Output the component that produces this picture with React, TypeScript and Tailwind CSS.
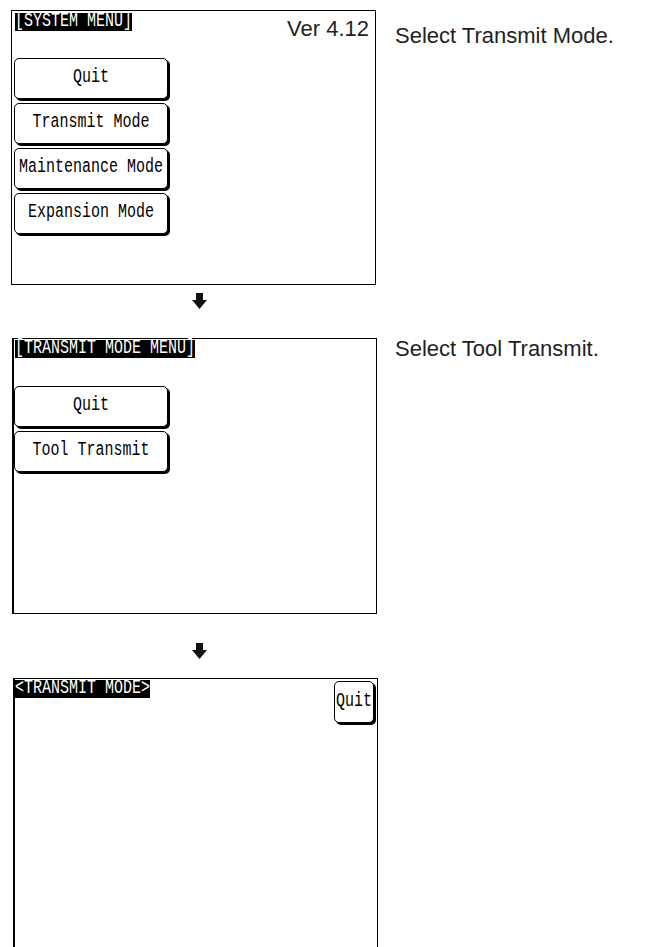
import React from 'react'

const lcd = "font-['Liberation_Mono','DejaVu_Sans_Mono',monospace] text-[15px]"
const sans = "font-['Liberation_Sans',Arial,sans-serif] text-[22px] leading-none text-[#231f20]"

function Title({ children }: { children: React.ReactNode }) {
  return (
    <div className={`${lcd} h-[18px] leading-[18px] bg-black text-white whitespace-pre`}>
      <span className="inline-block scale-y-[1.3]">{children}</span>
    </div>
  )
}

function LcdButton({ label, className = 'w-[154px] h-[41px]' }: { label: string; className?: string }) {
  return (
    <div
      className={`${className} ${lcd} flex items-center justify-center whitespace-pre rounded-[5px] border border-black bg-white text-black shadow-[2px_2px_0_#000]`}
    >
      <span className="inline-block scale-y-[1.3]">{label}</span>
    </div>
  )
}

function DownArrow() {
  return (
    <svg width="15" height="16" viewBox="0 0 15 16" className="ml-[192px]">
      <rect x="4" y="0" width="7" height="8" fill="#111" />
      <polygon points="0,7 15,7 7.5,16" fill="#111" />
    </svg>
  )
}

export default function App() {
  return (
    <div className="h-[947px] overflow-hidden bg-white pt-[10px]">
      {/* system menu */}
      <div className="flex items-start">
        <div className="ml-[11px] h-[275px] w-[365px] shrink-0 border border-black">
          <div className="flex h-[20px] items-start justify-between pl-[3px] pr-[6px] pt-[2px]">
            <Title>[SYSTEM MENU]</Title>
            <span className={`${sans} mt-[5px]`}>Ver 4.12</span>
          </div>
          <div className="mt-[27px] flex flex-col gap-[4px] pl-[2px]">
            <LcdButton label="Quit" />
            <LcdButton label="Transmit Mode" />
            <LcdButton label="Maintenance Mode" />
            <LcdButton label="Expansion Mode" />
          </div>
        </div>
        <p className={`${sans} ml-[19px] mt-[15px]`}>Select Transmit Mode.</p>
      </div>

      <div className="mt-[8px] flex">
        <DownArrow />
      </div>

      {/* transmit mode menu */}
      <div className="mt-[29px] flex items-start">
        <div className="ml-[12px] h-[276px] w-[365px] shrink-0 border border-l-2 border-black">
          <div className="flex h-[20px] items-start pl-[1px] pt-[1px]">
            <Title>[TRANSMIT MODE MENU]</Title>
          </div>
          <div className="mt-[27px] flex flex-col gap-[4px]">
            <LcdButton label="Quit" />
            <LcdButton label="Tool Transmit" />
          </div>
        </div>
        <p className={`${sans} ml-[18px] mt-0`}>Select Tool Transmit.</p>
      </div>

      <div className="mt-[29px] flex">
        <DownArrow />
      </div>

      {/* transmit mode */}
      <div className="mt-[19px] flex items-start">
        <div className="ml-[13px] h-[300px] w-[365px] shrink-0 border border-l-2 border-black">
          <div className="flex items-start justify-between pl-0 pr-[3px] pt-[1px]">
            <Title>&lt;TRANSMIT MODE&gt;</Title>
            <div className="mt-[1px]">
              <LcdButton label="Quit" className="w-[40px] h-[42px]" />
            </div>
          </div>
        </div>
      </div>
    </div>
  )
}
